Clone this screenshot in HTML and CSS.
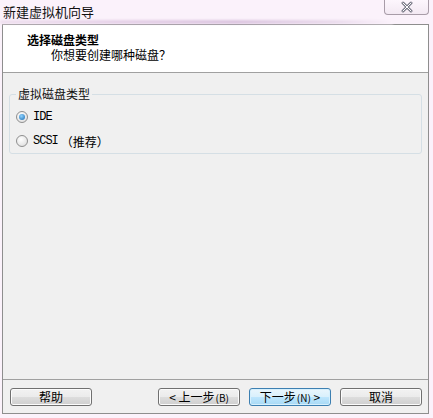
FILE: index.html
```html
<!DOCTYPE html>
<html lang="zh">
<head>
<meta charset="utf-8">
<link rel="stylesheet" href="styles.css">
</head>
<body>
<div class="titlebar">
  <span class="title">新建虚拟机向导</span>
  <div class="close">
    <svg width="16" height="12" viewBox="0 0 16 12"><path d="M4 2 L12 10 M12 2 L4 10" stroke="#7a7a88" stroke-width="3" stroke-linecap="round"/><path d="M4 2 L12 10 M12 2 L4 10" stroke="#ffffff" stroke-width="1" stroke-linecap="round"/></svg>
  </div>
</div>
<div class="blur"></div>
<div class="window">
  <div class="header">
    <div class="h-title">选择磁盘类型</div>
    <div class="h-sub">你想要创建哪种磁盘？</div>
  </div>
  <div class="content">
    <fieldset class="group">
      <legend>虚拟磁盘类型</legend>
      <label class="radio"><span class="dot checked"></span><span class="mono">IDE</span></label>
      <label class="radio"><span class="dot"></span><span class="mono">SCSI</span><span class="cjk">（推荐）</span></label>
    </fieldset>
  </div>
  <div class="footer">
    <button class="btn">帮助</button>
    <div class="spacer"></div>
    <button class="btn">&lt; 上一步<span class="acc">(B)</span></button>
    <button class="btn primary">下一步<span class="acc">(N)</span> &gt;</button>
    <button class="btn">取消</button>
  </div>
</div>
</body>
</html>
```
FILE: styles.css
```css
* { box-sizing: border-box; }
html, body { margin: 0; padding: 0; }
body {
  width: 433px;
  height: 418px;
  background: #fbf2fb;
  font-family: "Noto Sans CJK SC", "Noto Sans", sans-serif;
  font-size: 12px;
  color: #000;
  overflow: hidden;
}
.titlebar {
  height: 20px;
  display: flex;
  justify-content: space-between;
  align-items: flex-start;
  padding-left: 3px;
  padding-right: 4px;
}
.title {
  font-size: 13px;
  line-height: 13px;
  margin-top: 5px;
  color: #111;
}
.close {
  width: 45px;
  height: 15px;
  border: 1px solid #a89ca8;
  border-top: none;
  border-radius: 0 0 4px 4px;
  background: linear-gradient(#fdf6fd, #f3e9f3);
  display: flex;
  align-items: center;
  justify-content: center;
  padding-bottom: 1px;
}
.blur {
  height: 4px;
  margin: 0 40px 0 0;
  background: linear-gradient(90deg, #efe0ef 0%, #e6d2e8 30%, #dcc6e0 60%, #eadbec 85%, #fbf2fb 100%);
  filter: blur(1px);
}
.window {
  margin: 0 4px 0 2px;
  height: 390px;
  border: 1px solid #8e8e8e;
  background: #f0f0f0;
  display: flex;
  flex-direction: column;
}
.header {
  height: 48px;
  background: #fff;
  border-bottom: 1px solid #a0a0a0;
  padding: 8px 0 0 24px;
}
.h-title {
  font-weight: bold;
  font-size: 12px;
  line-height: 14px;
}
.h-sub {
  font-size: 12px;
  line-height: 14px;
  margin-top: 1px;
  padding-left: 24px;
}
.content {
  flex: 1;
  padding: 14px 6px 0 6px;
}
.group {
  margin: 0;
  border: 1px solid #d5dfe5;
  border-radius: 3px;
  padding: 4px 0 4px 6px;
  height: 67px;
}
.group legend {
  padding: 0 2px;
  margin-left: 0;
  font-size: 12px;
  line-height: 14px;
  color: #111;
}
.radio {
  display: flex;
  align-items: center;
  height: 24px;
  gap: 5px;
}
.dot {
  width: 12px;
  height: 12px;
  border-radius: 50%;
  border: 1px solid #8f8f8f;
  background: radial-gradient(circle at 40% 35%, #ffffff, #d9d9d9);
  position: relative;
}
.dot.checked::after {
  content: "";
  position: absolute;
  left: 2px;
  top: 2px;
  width: 6px;
  height: 6px;
  border-radius: 50%;
  background: radial-gradient(circle at 40% 35%, #8fd3ff, #1a6ab0);
}
.mono {
  font-family: "Liberation Mono", "DejaVu Sans Mono", monospace;
  font-size: 12px;
  letter-spacing: -1px;
}
.cjk { font-size: 12px; margin-left: -2px; }
.footer {
  height: 34px;
  border-top: 1px solid #a0a0a0;
  display: flex;
  align-items: flex-start;
  padding: 8px 6px 0 7px;
  gap: 9px;
}
.spacer { flex: 1; }
.btn {
  width: 82px;
  height: 18px;
  border: 1px solid #707070;
  border-radius: 3px;
  background: linear-gradient(#f2f2f2 0%, #ebebeb 50%, #dddddd 51%, #cfcfcf 100%);
  font-family: "Noto Sans CJK SC", sans-serif;
  font-size: 12px;
  line-height: 14px;
  padding: 0;
  color: #000;
  box-shadow: inset 0 0 0 1px #fcfcfc;
}
.btn.primary {
  border-color: #3c7fb1;
  background: linear-gradient(#eaf6fd 0%, #d9f0fc 50%, #bee6fd 51%, #a7d9f5 100%);
  box-shadow: inset 0 0 0 1px #d6f0fd;
}
.acc { font-size: 10px; margin-left: 1px; }
```
